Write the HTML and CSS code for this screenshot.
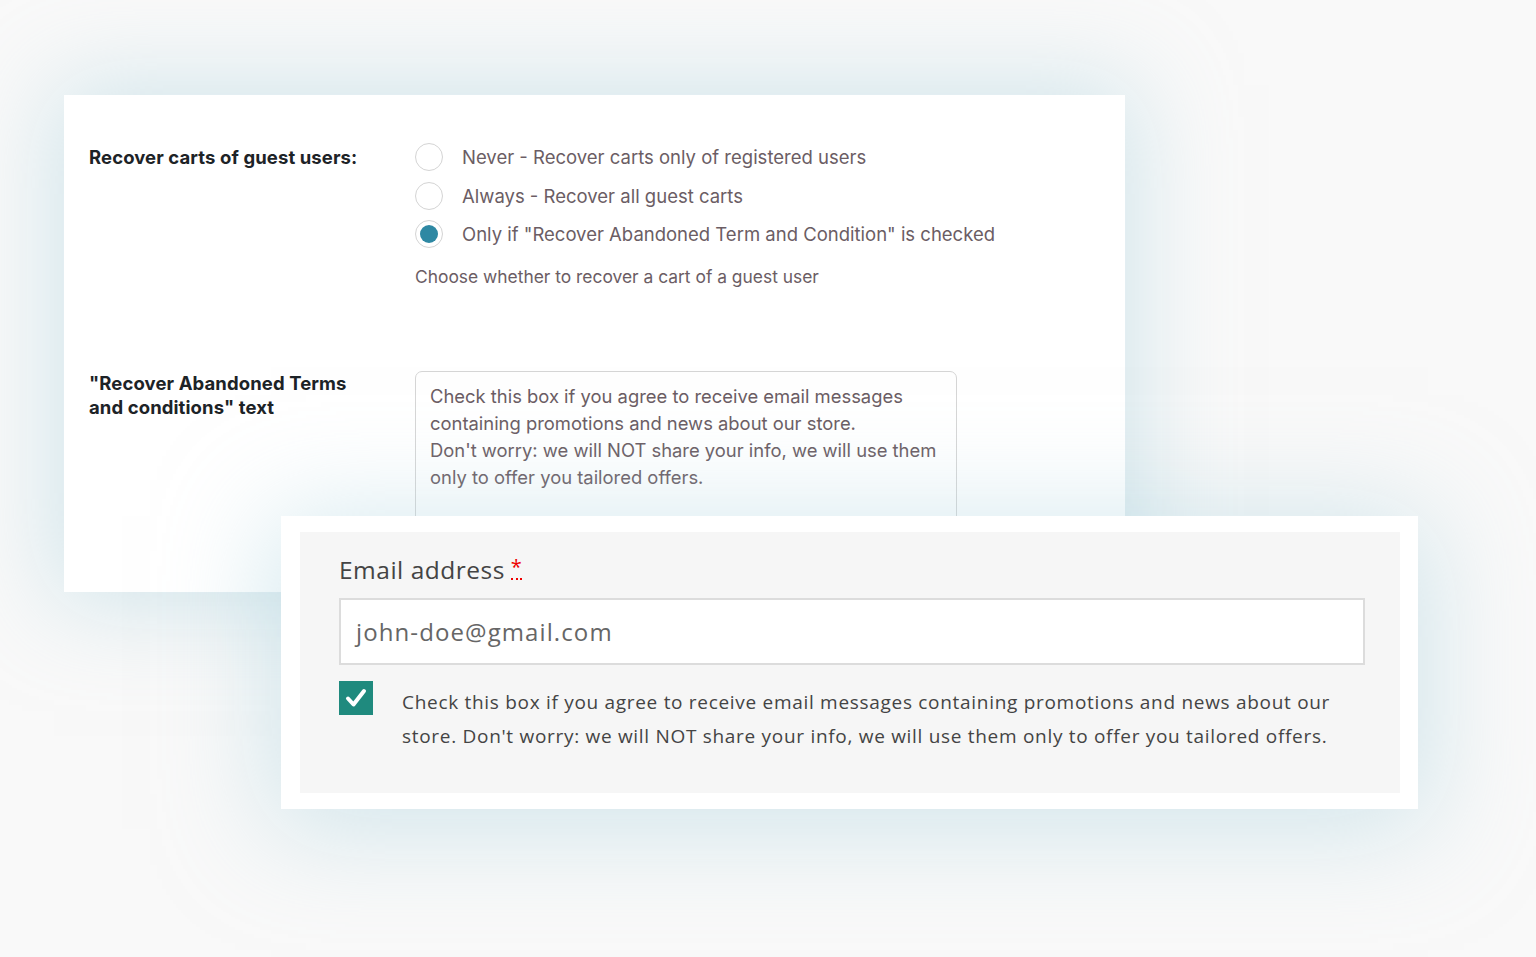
FILE: index.html
```html
<!DOCTYPE html>
<html lang="en">
<head>
<meta charset="utf-8">
<title>Recover guest carts</title>
<link rel="stylesheet" href="styles.css">
</head>
<body>
<div class="stage">
  <section class="settings">
    <div class="row row-first">
      <div class="label">Recover carts of guest users:</div>
      <div class="field">
        <div class="option"><span class="radio"></span><span>Never - Recover carts only of registered users</span></div>
        <div class="option"><span class="radio"></span><span>Always - Recover all guest carts</span></div>
        <div class="option"><span class="radio checked"></span><span>Only if "Recover Abandoned Term and Condition" is checked</span></div>
        <p class="desc">Choose whether to recover a cart of a guest user</p>
      </div>
    </div>
    <div class="row row-second">
      <div class="label label-multi">"Recover Abandoned Terms<br>and conditions" text</div>
      <div class="field">
        <div class="textarea">Check this box if you agree to receive email messages containing promotions and news about our store.<br>Don't worry: we will NOT share your info, we will use them only to offer you tailored offers.</div>
      </div>
    </div>
  </section>

  <section class="checkout">
    <div class="panel">
      <div class="email-label"><span>Email address</span><abbr class="req" title="required">*</abbr></div>
      <div class="input">john-doe@gmail.com</div>
      <div class="consent">
        <span class="checkbox">
          <svg viewBox="0 0 34 34" width="34" height="34"><path d="M9 17.5 L14.5 23.5 L25 10" fill="none" stroke="#fff" stroke-width="4" stroke-linecap="round" stroke-linejoin="round"/></svg>
        </span>
        <p class="consent-text">Check this box if you agree to receive email messages containing promotions and news about our store. Don't worry: we will NOT share your info, we will use them only to offer you tailored offers.</p>
      </div>
    </div>
  </section>
</div>
</body>
</html>
```

FILE: styles.css
```css
html, body {
  margin: 0;
  padding: 0;
}
body {
  background: #f9f9f9;
  width: 1536px;
  height: 957px;
  overflow: hidden;
}
.stage {
  padding-top: 95px;
}

/* ---------- admin settings card ---------- */
.settings {
  width: 1061px;
  height: 497px;
  margin-left: 64px;
  padding: 0 25px;
  box-sizing: border-box;
  background: #fff;
  box-shadow: 0 0 90px 10px rgba(172, 212, 224, 0.5);
  font-family: Inter, "Liberation Sans", sans-serif;
  overflow: hidden;
}
.row {
  display: grid;
  grid-template-columns: 326px 1fr;
}
.row-first {
  padding-top: 43px;
}
.row-second {
  margin-top: 82px;
}
.label {
  font-weight: 700;
  font-size: 18.5px;
  color: #1d2327;
  line-height: 38px;
  letter-spacing: 0.1px;
}
.label-multi {
  line-height: 24px;
}
.option {
  display: flex;
  align-items: center;
  height: 38.5px;
  font-size: 18.5px;
  color: #6b5d64;
}
.radio {
  width: 26px;
  height: 26px;
  border: 1px solid #d4d4d4;
  border-radius: 50%;
  margin-right: 19px;
  box-sizing: content-box;
  display: flex;
  align-items: center;
  justify-content: center;
  background: #fff;
  flex: none;
}
.radio.checked::after {
  content: "";
  width: 18px;
  height: 18px;
  border-radius: 50%;
  background: #2e88a3;
}
.desc {
  margin: 11px 0 0;
  font-size: 17.4px;
  line-height: 24px;
  color: #6b5d64;
}
.textarea {
  width: 542px;
  height: 170px;
  box-sizing: border-box;
  border: 1px solid #d6d6d6;
  border-radius: 7px;
  padding: 11px 14px 12px;
  font-size: 18.4px;
  line-height: 27px;
  color: #6b5d64;
}

/* ---------- checkout card ---------- */
.checkout {
  position: relative;
  z-index: 1;
  width: 1137px;
  height: 293px;
  margin-left: 281px;
  margin-top: -76px;
  padding: 16px 18px 16px 19px;
  box-sizing: border-box;
  background: #fff;
  box-shadow: 0 10px 100px 10px rgba(172, 212, 224, 0.5);
  font-family: "Open Sans", sans-serif;
}
.panel {
  height: 100%;
  background: #f6f6f6;
  padding: 22px 35px 0 39px;
  box-sizing: border-box;
}
.email-label {
  display: flex;
  align-items: flex-start;
  gap: 6px;
  font-size: 24.5px;
  line-height: 32px;
  color: #444;
  letter-spacing: 0.5px;
}
.req {
  color: #e00;
  text-decoration: none;
  border-bottom: 2px dotted #e00;
  font-size: 20px;
  line-height: 22px;
  display: block;
  margin-top: 2px;
}
.input {
  margin-top: 12px;
  height: 67px;
  box-sizing: border-box;
  border: 2px solid #dcdcdc;
  background: #fff;
  padding: 0 15px;
  display: flex;
  align-items: center;
  font-size: 24px;
  color: #666;
  letter-spacing: 1.1px;
}
.consent {
  display: flex;
  margin-top: 16px;
  align-items: flex-start;
}
.checkbox {
  flex: none;
  width: 34px;
  height: 34px;
  background: #1f8a7e;
  display: block;
}
.checkbox svg {
  display: block;
}
.consent-text {
  margin: 0 0 0 29px;
  font-size: 19px;
  line-height: 34px;
  color: #444;
  letter-spacing: 0.7px;
  max-width: 963px;
  position: relative;
  top: 4px;
}
```
